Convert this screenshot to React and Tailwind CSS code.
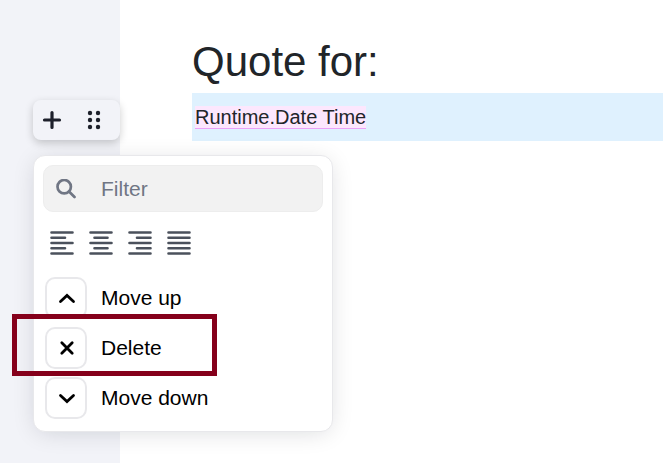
import React, { useState } from 'react';

const ALIGNMENTS = [
    { name: 'Align left', d: 'M1.500 1.500H22.500M1.500 6.750H15M1.500 12H22.500M1.500 17.250H15M1.500 22.500H22.500' },
    { name: 'Align center', d: 'M1.500 1.500H22.500M5.500 6.750H18.500M1.500 12H22.500M5.500 17.250H18.500M1.500 22.500H22.500' },
    { name: 'Align right', d: 'M1.500 1.500H22.500M9 6.750H22.500M1.500 12H22.500M9 17.250H22.500M1.500 22.500H22.500' },
    { name: 'Justify', d: 'M1.500 1.500H22.500M1.500 6.750H22.500M1.500 12H22.500M1.500 17.250H22.500M1.500 22.500H22.500' },
];

const ACTIONS = [
    { label: 'Move up', d: 'M4.500 13.500L11 7.500L17.500 13.500' },
    { label: 'Delete', d: 'M5.800 4.800L16.200 15.200M16.200 4.800L5.800 15.200', highlighted: true },
    { label: 'Move down', d: 'M4.500 7.500L11 13.500L17.500 7.500' },
];

function BlockToolbar() {
    return (
        <div className="flex h-10 items-center rounded-lg bg-[#f2f3f8] pl-[7px] shadow-[0_3px_8px_rgba(0,0,0,0.2)]">
            <button type="button" aria-label="Add block" className="flex size-6 items-center justify-center">
                <svg viewBox="0 0 20 20" className="size-5" fill="none" stroke="#1d202b" strokeWidth="3.200" strokeLinecap="round">
                    <path d="M10 2.500V17.500M2.500 10H17.500" />
                </svg>
            </button>
            <button type="button" aria-label="Block settings" className="ml-[18px] flex size-6 items-center justify-center">
                <svg viewBox="0 0 20 20" className="size-5" fill="#1d202b">
                    <circle cx="6" cy="3" r="2.200" />
                    <circle cx="14" cy="3" r="2.200" />
                    <circle cx="6" cy="10" r="2.200" />
                    <circle cx="14" cy="10" r="2.200" />
                    <circle cx="6" cy="17" r="2.200" />
                    <circle cx="14" cy="17" r="2.200" />
                </svg>
            </button>
        </div>
    );
}

function BlockMenu() {
    const [filter, setFilter] = useState('');
    const actions = ACTIONS.filter((a) => a.label.toLowerCase().includes(filter.toLowerCase()));

    return (
        <div className="absolute top-full left-0 mt-[15px] w-[300px] rounded-xl border border-[#e8e8eb] bg-white px-[9px] pt-[9px] pb-3 shadow-[0_3px_24px_-4px_rgba(13,20,33,0.16)]">
            <label className="flex h-[47px] items-center rounded-[10px] border border-[#ededed] bg-[#f2f2f2] pl-3">
                <svg viewBox="0 0 20 20" className="size-5 shrink-0" fill="none" stroke="#707684" strokeWidth="2.700" strokeLinecap="round">
                    <circle cx="8.200" cy="7.700" r="6.700" />
                    <path d="M13 12.500L18.500 18" />
                </svg>
                <input
                    type="text"
                    aria-label="Filter"
                    value={filter}
                    onChange={(e) => setFilter(e.target.value)}
                    placeholder="Filter"
                    className="ml-[25px] w-full min-w-0 bg-transparent text-[21px] leading-7 outline-none placeholder:text-[#707684]"
                />
            </label>

            <div className="mt-[19px] flex gap-[15px] pl-[7px]">
                {ALIGNMENTS.map((align) => (
                    <button key={align.name} type="button" aria-label={align.name} className="size-6">
                        <svg viewBox="0 0 24 24" className="size-6" fill="none" stroke="#4b515c" strokeWidth="2.600" strokeLinecap="round">
                            <path d={align.d} />
                        </svg>
                    </button>
                ))}
            </div>

            <div className="mt-[22px] flex flex-col gap-2 pl-0.5">
                {actions.map((action) => (
                    <div key={action.label} className="relative">
                        <button type="button" className="flex w-full items-center text-left text-[21px] leading-7 text-black">
                            <span className="flex size-[42px] items-center justify-center rounded-[10px] border-2 border-[#e8e8eb] bg-white">
                                <svg viewBox="0 0 20 20" className="size-5" fill="none" stroke="#000" strokeWidth="2.800" strokeLinecap="round">
                                    <path d={action.d} />
                                </svg>
                            </span>
                            <span className="ml-3.5">{action.label}</span>
                        </button>
                        {action.highlighted && (
                            <div className="pointer-events-none absolute -top-[13px] -left-[33px] z-10 h-[62px] w-[205px] border-[5px] border-[#85001b]" />
                        )}
                    </div>
                ))}
            </div>
        </div>
    );
}

export default function App() {
    return (
        <div className="flex min-h-screen bg-white font-['Liberation_Sans',Arial,sans-serif]">
            <aside className="w-[120px] shrink-0 bg-[#f2f3f8] pt-[100px] pl-[33px]">
                <div className="relative z-10">
                    <BlockToolbar />
                    <BlockMenu />
                </div>
            </aside>
            <main className="min-w-0 flex-1 pt-9 pl-[72px]">
                <h1 className="mb-[5px] text-[42px] leading-[52px] text-[#212529]">Quote for:</h1>
                <p className="bg-[#dff1fe] pl-[3px] text-xl leading-[48px] text-[#212529]">
                    <span className="border-b border-[#eba0f8] bg-[#fce7fd]">Runtime.Date Time</span>
                </p>
            </main>
        </div>
    );
}
